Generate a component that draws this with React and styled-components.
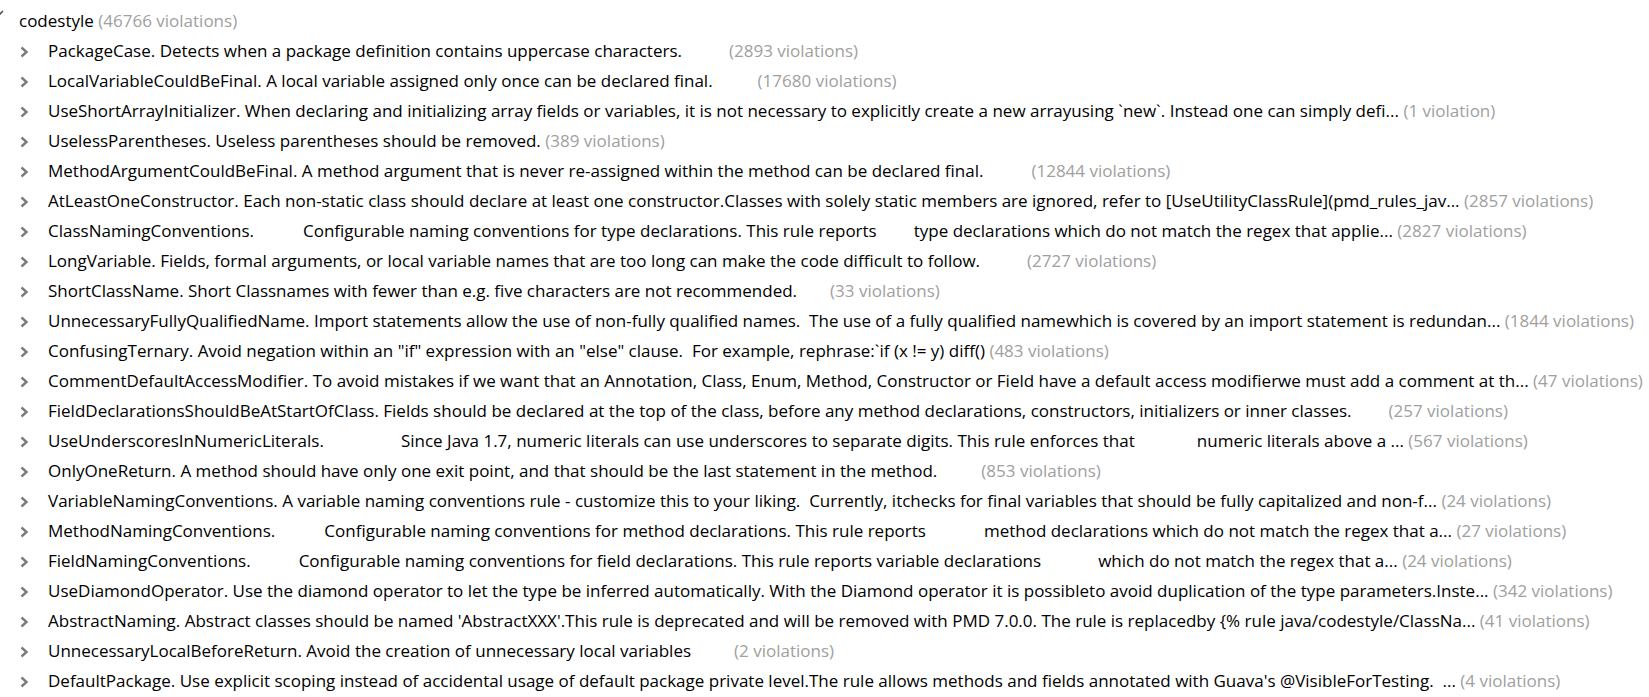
import React from 'react'
import styled, { createGlobalStyle } from 'styled-components'

const Global = createGlobalStyle`
  html, body {
    margin: 0;
    padding: 0;
    background: #ffffff;
    overflow: hidden;
  }
  body {
    font-family: "Open Sans", "Noto Sans", sans-serif;
  }
`

const Tree = styled.div`
  display: flex;
  flex-direction: column;
  padding-top: 5px;
  margin-left: -8px;
  width: 1680px;
`

const Row = styled.div`
  display: flex;
  align-items: center;
  height: 30px;
  padding-left: ${p => p.$depth * 28}px;
  white-space: pre;
  font-size: 17px;
  color: #000000;
`

const Toggle = styled.span`
  flex: 0 0 ${p => (p.$open ? 27 : 28)}px;
  display: flex;
  align-items: center;
  height: 100%;
  padding-top: ${p => (p.$open ? 0 : 3)}px;
  box-sizing: border-box;
`

const Label = styled.span`
  white-space: pre;
`

const Gap = styled.span`
  display: inline-block;
  width: ${p => p.$w}px;
`

const Count = styled.span`
  color: #a0a0a0;
`

const ChevronRight = () => (
  <svg width="9" height="12" viewBox="0 0 9 12">
    <polyline points="1.5,1.5 6.5,6 1.5,10.5" fill="none" stroke="#7b7b7b" strokeWidth="2.4" />
  </svg>
)

const ChevronDown = () => (
  <svg width="12" height="12" viewBox="0 0 12 12" style={{ marginTop: -12 }}>
    <polyline points="1,3 6,8 11,3" fill="none" stroke="#555555" strokeWidth="1.6" />
  </svg>
)

const rules = [
  ['PackageCase. Detects when a package definition contains uppercase characters.|47|', '(2893 violations)'],
  ['LocalVariableCouldBeFinal. A local variable assigned only once can be declared final.|45|', '(17680 violations)'],
  ['UseShortArrayInitializer. When declaring and initializing array fields or variables, it is not necessary to explicitly create a new arrayusing `new`. Instead one can simply defi... ', '(1 violation)'],
  ['UselessParentheses. Useless parentheses should be removed. ', '(389 violations)'],
  ['MethodArgumentCouldBeFinal. A method argument that is never re-assigned within the method can be declared final.|48|', '(12844 violations)'],
  ['AtLeastOneConstructor. Each non-static class should declare at least one constructor.Classes with solely static members are ignored, refer to [UseUtilityClassRule](pmd_rules_jav... ', '(2857 violations)'],
  ['ClassNamingConventions.|49|Configurable naming conventions for type declarations. This rule reports|37|type declarations which do not match the regex that applie... ', '(2827 violations)'],
  ['LongVariable. Fields, formal arguments, or local variable names that are too long can make the code difficult to follow.|47|', '(2727 violations)'],
  ['ShortClassName. Short Classnames with fewer than e.g. five characters are not recommended.|33|', '(33 violations)'],
  ['UnnecessaryFullyQualifiedName. Import statements allow the use of non-fully qualified names.  The use of a fully qualified namewhich is covered by an import statement is redundan... ', '(1844 violations)'],
  ['ConfusingTernary. Avoid negation within an "if" expression with an "else" clause.  For example, rephrase:`if (x != y) diff() ', '(483 violations)'],
  ['CommentDefaultAccessModifier. To avoid mistakes if we want that an Annotation, Class, Enum, Method, Constructor or Field have a default access modifierwe must add a comment at th... ', '(47 violations)'],
  ['FieldDeclarationsShouldBeAtStartOfClass. Fields should be declared at the top of the class, before any method declarations, constructors, initializers or inner classes.|37|', '(257 violations)'],
  ['UseUnderscoresInNumericLiterals.|77|Since Java 1.7, numeric literals can use underscores to separate digits. This rule enforces that|62|numeric literals above a ... ', '(567 violations)'],
  ['OnlyOneReturn. A method should have only one exit point, and that should be the last statement in the method.|44|', '(853 violations)'],
  ['VariableNamingConventions. A variable naming conventions rule - customize this to your liking.  Currently, itchecks for final variables that should be fully capitalized and non-f... ', '(24 violations)'],
  ['MethodNamingConventions.|49|Configurable naming conventions for method declarations. This rule reports|58|method declarations which do not match the regex that a... ', '(27 violations)'],
  ['FieldNamingConventions.|48|Configurable naming conventions for field declarations. This rule reports variable declarations|57|which do not match the regex that a... ', '(24 violations)'],
  ['UseDiamondOperator. Use the diamond operator to let the type be inferred automatically. With the Diamond operator it is possibleto avoid duplication of the type parameters.Inste... ', '(342 violations)'],
  ["AbstractNaming. Abstract classes should be named 'AbstractXXX'.This rule is deprecated and will be removed with PMD 7.0.0. The rule is replacedby {% rule java/codestyle/ClassNa... ", '(41 violations)'],
  ['UnnecessaryLocalBeforeReturn. Avoid the creation of unnecessary local variables|43|', '(2 violations)'],
  ["DefaultPackage. Use explicit scoping instead of accidental usage of default package private level.The rule allows methods and fields annotated with Guava's @VisibleForTesting.  ... ", '(4 violations)'],
]

// "|47|" inside a label stands for a wide blank of that many pixels
function RuleText({ text }) {
  const parts = text.split(/\|(\d+)\|/)
  return parts.map((part, i) =>
    i % 2 === 1 ? <Gap key={i} $w={Number(part)} /> : <Label key={i}>{part}</Label>
  )
}

export default function App() {
  return (
    <>
      <Global />
      <Tree>
        <Row $depth={0}>
          <Toggle $open>
            <ChevronDown />
          </Toggle>
          <Label>codestyle </Label>
          <Count>(46766 violations)</Count>
        </Row>
        {rules.map(([text, count]) => (
          <Row key={text} $depth={1}>
            <Toggle>
              <ChevronRight />
            </Toggle>
            <RuleText text={text} />
            <Count>{count}</Count>
          </Row>
        ))}
      </Tree>
    </>
  )
}
